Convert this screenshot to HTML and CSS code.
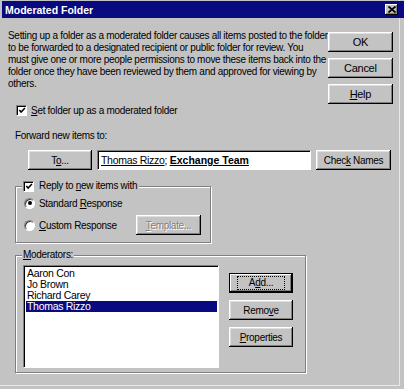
FILE: index.html
```html
<!DOCTYPE html>
<html>
<head>
<meta charset="utf-8">
<link rel="stylesheet" href="styles.css">
</head>
<body>
<div class="window">
  <div class="titlebar">
    <span class="title">Moderated Folder</span>
    <span class="close"><svg width="8" height="7" viewBox="0 0 8 7"><path d="M0.5 0.5 L7.5 6.5 M7.5 0.5 L0.5 6.5" stroke="#000" stroke-width="1.8" fill="none"/></svg></span>
  </div>
  <div class="body">
    <div class="top">
      <div class="left">
        <p class="desc">Setting up a folder as a moderated folder causes all items posted to the folder<br>to be forwarded to a designated recipient or public folder for review. You<br>must give one or more people permissions to move these items back into the<br>folder once they have been reviewed by them and approved for viewing by<br>others.</p>
        <div class="check-row">
          <span class="checkbox"><svg width="9" height="9" viewBox="0 0 9 9"><path d="M1.5 4 L3.5 6.2 L7.8 1.6" stroke="#000" stroke-width="1.7" fill="none"/></svg></span>
          <span><u>S</u>et folder up as a moderated folder</span>
        </div>
      </div>
      <div class="side">
        <div class="btn">OK</div>
        <div class="btn">Cancel</div>
        <div class="btn"><span><u>H</u>elp</span></div>
      </div>
    </div>
    <div class="fwd-label">Forward new items to:</div>
    <div class="fwd-row">
      <div class="btn btn-to"><span>T<u>o</u>...</span></div>
      <div class="field"><span><u>Thomas Rizzo</u>; <b><u>Exchange Team</u></b></span></div>
      <div class="btn btn-check"><span>Chec<u>k</u> Names</span></div>
    </div>
    <fieldset class="group reply">
      <legend>
        <span class="checkbox"><svg width="9" height="9" viewBox="0 0 9 9"><path d="M1.5 4 L3.5 6.2 L7.8 1.6" stroke="#000" stroke-width="1.7" fill="none"/></svg></span>
        <span>Reply to <u>n</u>ew items with</span>
      </legend>
      <div class="radio-row std"><span class="radio on"></span><span>Standard <u>R</u>esponse</span></div>
      <div class="radio-row custom"><span class="radio"></span><span><u>C</u>ustom Response</span><div class="btn btn-tpl disabled"><span><u>T</u>emplate...</span></div></div>
    </fieldset>
    <fieldset class="group mods">
      <legend><u>M</u>oderators:</legend>
      <div class="mods-row">
        <ul class="list">
          <li>Aaron Con</li>
          <li>Jo Brown</li>
          <li>Richard Carey</li>
          <li class="sel">Thomas Rizzo</li>
        </ul>
        <div class="mods-btns">
          <div class="btn focus"><span class="focus-ring">A<u>d</u>d...</span></div>
          <div class="btn"><span>Remo<u>v</u>e</span></div>
          <div class="btn"><span><u>P</u>roperties</span></div>
        </div>
      </div>
    </fieldset>
  </div>
</div>
</body>
</html>
```
FILE: styles.css
```css
html, body {
  margin: 0;
  padding: 0;
  background: #c3c3c3;
}
.window {
  width: 404px;
  height: 389px;
  box-sizing: border-box;
  padding: 1px 0 0 2px;
  background: #c3c3c3;
  font-family: "Liberation Sans", Arial, sans-serif;
  font-size: 10px;
  letter-spacing: -0.3px;
  color: #000;
  overflow: hidden;
  box-shadow: inset -4px -3px 0 #c3c3c3, inset -5px -4px 0 #e8e8e8;
}
.titlebar {
  height: 17px;
  background: #0a0a80;
  display: flex;
  align-items: center;
  justify-content: space-between;
  padding: 0 6px 0 3px;
}
.title {
  color: #fff;
  font-weight: bold;
  font-size: 10.5px;
  letter-spacing: 0;
}
.close {
  width: 13px;
  height: 11px;
  background: #c3c3c3;
  box-shadow: inset -1px -1px #000, inset 1px 1px #fff, inset -2px -2px #808080;
  display: flex;
  align-items: center;
  justify-content: center;
}
.body {
  padding: 12px 13px 0 6px;
}
.top {
  display: flex;
  justify-content: space-between;
  align-items: flex-start;
}
.desc {
  margin: 0;
  line-height: 12px;
  white-space: nowrap;
}
.check-row {
  margin: 14px 0 0 8px;
  display: flex;
  align-items: center;
  gap: 4px;
  height: 12px;
}
.checkbox {
  width: 11px;
  height: 11px;
  box-sizing: border-box;
  background: #fff;
  border: 1px solid;
  border-color: #808080 #fff #fff #808080;
  box-shadow: inset 1px 1px #000;
  display: flex;
  align-items: center;
  justify-content: center;
  padding: 1px 0 0 1px;
}
.side {
  margin-top: 2px;
  display: flex;
  flex-direction: column;
  gap: 6px;
}
.btn {
  width: 65px;
  height: 20px;
  box-sizing: border-box;
  background: #c3c3c3;
  box-shadow: inset -1px -1px #000, inset 1px 1px #fff, inset -2px -2px #808080, inset 2px 2px #dfdfdf;
  display: flex;
  align-items: center;
  justify-content: center;
  white-space: pre;
}
.side .btn {
  font-size: 11px;
}
.fwd-label {
  margin: 14px 0 0 7px;
  line-height: 12px;
}
.fwd-row {
  display: flex;
  align-items: center;
  margin: 8px 0 0 20px;
  gap: 5px;
}
.btn-to {
  width: 64px;
}
.field {
  width: 214px;
  height: 20px;
  box-sizing: border-box;
  background: #fff;
  border: 1px solid;
  border-color: #808080 #fff #fff #808080;
  box-shadow: inset 1px 1px #000;
  padding: 0 3px;
  display: flex;
  align-items: center;
  white-space: pre;
  font-size: 10.5px;
}
.field b {
  font-weight: bold;
  letter-spacing: 0;
}
.btn-check {
  width: 75px;
}
.group {
  margin: 0 0 0 7px;
  border: 1px solid #808080;
  box-shadow: 1px 1px 0 #fff, inset 1px 1px 0 #fff;
  padding: 0 9px 7px 6px;
}
.group legend {
  padding: 0 2px 0 1px;
  height: 12px;
  line-height: 12px;
  background: #c3c3c3;
}
.reply {
  width: 196px;
  box-sizing: border-box;
  margin-top: 10px;
}
.reply legend {
  display: flex;
  align-items: center;
  gap: 5px;
}
.radio-row {
  display: flex;
  align-items: center;
  gap: 4px;
  padding-left: 2px;
}
.std {
  margin-top: 5px;
  height: 12px;
}
.custom {
  margin-top: 6px;
  height: 20px;
}
.radio {
  width: 11px;
  height: 11px;
  box-sizing: border-box;
  border-radius: 50%;
  background: #fff;
  border: 1px solid;
  border-color: #808080 #fff #fff #808080;
  box-shadow: inset 1px 1px #404040;
  display: flex;
  align-items: center;
  justify-content: center;
}
.radio.on::after {
  content: "";
  width: 4px;
  height: 4px;
  border-radius: 50%;
  background: #000;
}
.btn-tpl {
  margin-left: auto;
}
.disabled {
  color: #808080;
  text-shadow: 1px 1px 0 #fff;
}
.mods {
  width: 291px;
  box-sizing: border-box;
  margin-top: 6px;
  padding: 0 4px 4px 7px;
}
.mods legend {
  padding: 0 1px;
  margin-left: -1px;
}
.mods-row {
  display: flex;
  align-items: flex-start;
  gap: 10px;
  margin-top: 4px;
}
.list {
  list-style: none;
  margin: 0;
  width: 196px;
  height: 103px;
  box-sizing: border-box;
  background: #fff;
  border: 1px solid;
  border-color: #808080 #fff #fff #808080;
  box-shadow: inset 1px 1px #000;
  padding: 2px 1px 0 2px;
}
.list li {
  height: 11px;
  line-height: 11px;
  padding-left: 1px;
  font-size: 10.5px;
}
.list li.sel {
  background: #0a0a80;
  color: #fff;
}
.mods-btns {
  margin-top: 8px;
  display: flex;
  flex-direction: column;
  gap: 7px;
}
.mods-btns .btn {
  width: 64px;
}
.btn.focus {
  box-shadow: inset 0 0 0 1px #000, inset -2px -2px #000, inset 2px 2px #fff, inset -3px -3px #808080;
}
.focus-ring {
  outline: 1px dotted #000;
  outline-offset: 0;
  padding: 1px 11px;
  line-height: 10px;
}
```
